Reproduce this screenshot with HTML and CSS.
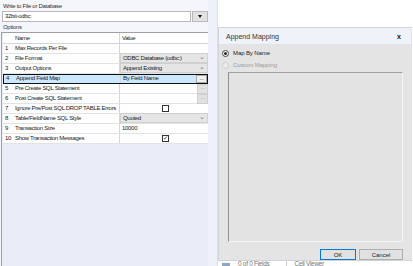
FILE: index.html
```html
<!DOCTYPE html>
<html lang="en">

<head>
    <meta charset="UTF-8">
    <title>Write to File or Database</title>
    <link rel="stylesheet" href="styles.css">
</head>

<body>
    <div class="left-panel">
        <div class="caption">Write to File or Database</div>
        <div class="picker">
            <div class="picker-box">32bit-odbc:</div>
            <div class="picker-btn"><span class="tri"></span></div>
        </div>
        <div class="caption options">Options</div>
        <div class="grid">
            <div class="row head">
                <div class="c-idx"></div>
                <div class="c-name">Name</div>
                <div class="c-val">Value</div>
            </div>
            <div class="row">
                <div class="c-idx">1</div>
                <div class="c-name">Max Records Per File</div>
                <div class="c-val"></div>
            </div>
            <div class="row">
                <div class="c-idx">2</div>
                <div class="c-name">File Format</div>
                <div class="c-val combo">ODBC Database (odbc:)<span class="chev">&#8964;</span></div>
            </div>
            <div class="row">
                <div class="c-idx">3</div>
                <div class="c-name">Output Options</div>
                <div class="c-val combo">Append Existing<span class="chev">&#8964;</span></div>
            </div>
            <div class="row selected">
                <div class="c-idx">4</div>
                <div class="c-name">Append Field Map</div>
                <div class="c-val">By Field Name<span class="dots active">...</span></div>
            </div>
            <div class="row">
                <div class="c-idx">5</div>
                <div class="c-name">Pre Create SQL Statement</div>
                <div class="c-val"><span class="dots">...</span></div>
            </div>
            <div class="row">
                <div class="c-idx">6</div>
                <div class="c-name">Post Create SQL Statement</div>
                <div class="c-val"><span class="dots">...</span></div>
            </div>
            <div class="row">
                <div class="c-idx">7</div>
                <div class="c-name">Ignore Pre/Post SQL DROP TABLE Errors</div>
                <div class="c-val center"><span class="check"></span></div>
            </div>
            <div class="row">
                <div class="c-idx">8</div>
                <div class="c-name">Table/FieldName SQL Style</div>
                <div class="c-val combo">Quoted<span class="chev">&#8964;</span></div>
            </div>
            <div class="row">
                <div class="c-idx">9</div>
                <div class="c-name">Transaction Size</div>
                <div class="c-val">10000</div>
            </div>
            <div class="row">
                <div class="c-idx">10</div>
                <div class="c-name">Show Transaction Messages</div>
                <div class="c-val center"><span class="check on">&#10003;</span></div>
            </div>
        </div>
    </div>

    <div class="gutter"></div>

    <div class="right-panel">
        <div class="top-fill"></div>
        <div class="dialog">
            <div class="dialog-head">
                <span>Append Mapping</span>
                <span class="close">x</span>
            </div>
            <div class="dialog-body">
                <label class="radio"><span class="dot on"></span>Map By Name</label>
                <label class="radio off"><span class="dot"></span>Custom Mapping</label>
                <div class="mapping-box"></div>
                <div class="buttons">
                    <button class="btn default">OK</button>
                    <button class="btn">Cancel</button>
                </div>
            </div>
        </div>
        <div class="status">
            <span class="status-icon"></span>
            <span>0 of 0 Fields</span>
            <span class="sep">Cell Viewer</span>
        </div>
    </div>
</body>

</html>
```

FILE: styles.css
```css
body {
    margin: 0;
    width: 413px;
    height: 266px;
    overflow: hidden;
    display: flex;
    font-family: "Liberation Sans", Arial, sans-serif;
    font-size: 6px;
    letter-spacing: -0.3px;
    color: #222;
    background-color: #fff;
}

.left-panel {
    width: 208px;
    display: flex;
    flex-direction: column;
    background-color: #f5f6fb;
}

.caption {
    height: 9px;
    line-height: 9px;
    padding: 2px 0 0 3px;
    color: #333;
}

.options {
    height: 9px;
    padding-top: 1px;
}

.picker {
    display: flex;
    margin-left: 2px;
    height: 11px;
}

.picker-box {
    width: 188px;
    border: 1px solid #b9b9b9;
    background-color: white;
    line-height: 9px;
    padding-left: 2px;
}

.picker-btn {
    width: 14px;
    margin-left: 1px;
    border: 1px solid #b9b9b9;
    background-color: #e1e1e1;
    display: flex;
    align-items: center;
    justify-content: center;
}

.tri {
    width: 0;
    height: 0;
    border-left: 2.5px solid transparent;
    border-right: 2.5px solid transparent;
    border-top: 3px solid #111;
}

.grid {
    flex: 1;
    margin-left: 1px;
    border-left: 1px solid #a0a0a0;
    border-top: 1px solid #a0a0a0;
    background-color: #eaedf8;
    padding-left: 1px;
}

.row {
    display: flex;
    height: 10px;
    line-height: 9px;
    white-space: nowrap;
    background-color: white;
    border-bottom: 1px solid #e3e3e3;
    box-sizing: border-box;
}

.row.head {
    height: 11px;
    line-height: 10px;
    border-bottom: 1px solid #d5d5d5;
}

.c-idx {
    width: 10px;
    padding-left: 2px;
    box-sizing: border-box;
}

.c-name {
    width: 107px;
    padding-left: 2px;
    box-sizing: border-box;
    overflow: hidden;
    border-right: 1px solid #d5d5d5;
}

.c-val {
    flex: 1;
    position: relative;
    padding-left: 2px;
}

.c-val.center {
    display: flex;
    justify-content: center;
    align-items: center;
}

.combo {
    background-color: #e5e5e5;
    border: 1px solid #d0d0d0;
    margin: -1px 0 0 0;
    line-height: 9px;
}

.chev {
    position: absolute;
    right: 2px;
    top: -2px;
    color: #777;
    font-size: 7px;
}

.selected {
    background-color: #cce8ff;
    border: 1.5px solid #111;
    line-height: 7px;
}

.dots {
    position: absolute;
    right: 0;
    top: 0;
    width: 9px;
    height: 8px;
    line-height: 5px;
    text-align: center;
    background-color: #e1e1e1;
    border: 1px solid #cfcfcf;
    color: #999;
}

.dots.active {
    top: 0;
    height: 6px;
    background-color: #f0f0f0;
    border-color: #aaa;
    color: #333;
}

.check {
    width: 5px;
    height: 5px;
    border: 1px solid #333;
    background-color: white;
    font-size: 6px;
    line-height: 5px;
    text-align: center;
}

.gutter {
    width: 9px;
    background-color: #edf0f8;
    border-right: 1px solid #d9dfee;
}

.right-panel {
    width: 195px;
    display: flex;
    flex-direction: column;
}

.top-fill {
    height: 27px;
    background-color: white;
}

.dialog {
    height: 234px;
    display: flex;
    flex-direction: column;
    border: 1px solid #cfd3dc;
    border-right-color: #e3e3e3;
    box-sizing: border-box;
    margin-right: 1px;
}

.dialog-head {
    height: 16px;
    display: flex;
    justify-content: space-between;
    align-items: center;
    padding: 0 10px 0 7px;
    background-color: #eff2f9;
    border-bottom: 1px solid #dfe3ec;
    font-size: 7px;
    letter-spacing: 0;
    color: #333;
}

.close {
    font-weight: bold;
    color: #111;
}

.dialog-body {
    flex: 1;
    display: flex;
    flex-direction: column;
    background-color: #e4e4e4;
    padding: 2px 0 0 3px;
    font-size: 6px;
    letter-spacing: -0.1px;
}

.radio {
    display: flex;
    align-items: center;
    height: 12px;
    color: #222;
}

.radio.off {
    color: #9c9c9c;
}

.dot {
    width: 5px;
    height: 5px;
    border-radius: 50%;
    border: 1px solid #444;
    background-color: #fff;
    margin-right: 4px;
    position: relative;
}

.radio.off .dot {
    border-color: #cfcfcf;
    background-color: #ececec;
}

.dot.on::after {
    content: "";
    position: absolute;
    left: 1px;
    top: 1px;
    width: 3px;
    height: 3px;
    border-radius: 50%;
    background-color: #222;
}

.mapping-box {
    height: 168px;
    margin: 1px 8px 0 6px;
    border-left: 1px solid #8f8f8f;
    border-top: 1px solid #a0a0a0;
    border-right: 1px solid #f4f4f4;
    border-bottom: 1px solid #f4f4f4;
    background-color: #e3e3e3;
}

.buttons {
    display: flex;
    justify-content: flex-end;
    gap: 3px;
    margin: 7px 8px 0 0;
}

.btn {
    height: 11px;
    padding: 0;
    font-family: "Liberation Sans", Arial, sans-serif;
    font-size: 6px;
    color: #222;
    background-color: #e1e1e1;
    border: 1px solid #adadad;
    width: 44px;
}

.btn.default {
    width: 36px;
    border-color: #0078d7;
}

.status {
    flex: 1;
    display: flex;
    align-items: flex-start;
    gap: 8px;
    padding-left: 4px;
    font-size: 6.5px;
    line-height: 6px;
    color: #777;
    overflow: hidden;
    background-color: white;
}

.status-icon {
    width: 8px;
    height: 6px;
    margin-top: 2px;
    background-color: #8fa5c4;
}

.sep {
    border-left: 1px solid #ccc;
    padding-left: 8px;
    margin-left: 8px;
}
```
